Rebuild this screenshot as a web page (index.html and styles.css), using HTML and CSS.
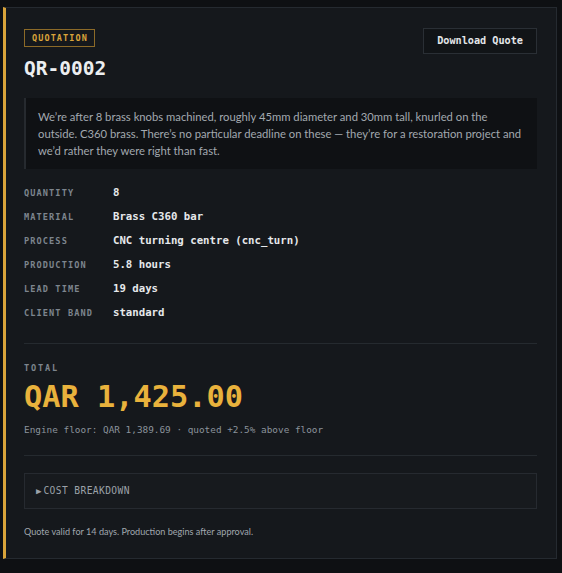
FILE: index.html
```html
<!DOCTYPE html>
<html>
<head>
<meta charset="utf-8">
<link rel="stylesheet" href="styles.css">
</head>
<body>
<div class="card">
  <div class="header">
    <div class="head-left">
      <span class="tag">QUOTATION</span>
      <h1 class="title">QR-0002</h1>
    </div>
    <button class="btn">Download Quote</button>
  </div>
  <blockquote class="note">We’re after 8 brass knobs machined, roughly 45mm diameter and 30mm tall, knurled on the outside. C360 brass. There’s no particular deadline on these — they’re for a restoration project and we’d rather they were right than fast.</blockquote>
  <dl class="specs">
    <dt>QUANTITY</dt><dd>8</dd>
    <dt>MATERIAL</dt><dd>Brass C360 bar</dd>
    <dt>PROCESS</dt><dd>CNC turning centre (cnc_turn)</dd>
    <dt>PRODUCTION</dt><dd>5.8 hours</dd>
    <dt>LEAD TIME</dt><dd>19 days</dd>
    <dt>CLIENT BAND</dt><dd>standard</dd>
  </dl>
  <hr class="rule rule-top">
  <div class="total-label">TOTAL</div>
  <div class="total">QAR 1,425.00</div>
  <div class="floor">Engine floor: QAR 1,389.69 · quoted +2.5% above floor</div>
  <hr class="rule rule-bottom">
  <div class="breakdown"><span class="tri">▶</span>COST BREAKDOWN</div>
  <p class="footer">Quote valid for 14 days. Production begins after approval.</p>
</div>
</body>
</html>
```

FILE: styles.css
```css
html, body {
  margin: 0;
  background: #0e1013;
}
body {
  padding: 7px 5px 15px 3px;
  font-family: "DejaVu Sans Mono", monospace;
}
.card {
  background: #15181c;
  border: 1px solid #252a30;
  border-left: 3px solid #d9a43a;
  padding: 21px 19px 19px 18px;
}
.header {
  display: flex;
  justify-content: space-between;
  align-items: flex-start;
}
.head-left {
  display: flex;
  flex-direction: column;
  align-items: flex-start;
}
.tag {
  font-size: 8.5px;
  line-height: 10px;
  font-weight: bold;
  letter-spacing: 1.1px;
  color: #d9a43a;
  border: 1px solid #8c6a28;
  padding: 3px 6px 3px 7px;
}
.title {
  margin: 10px 0 0;
  font-size: 19.5px;
  line-height: 24px;
  font-weight: bold;
  color: #eceef0;
}
.btn {
  margin-top: -1px;
  font-family: "DejaVu Sans Mono", monospace;
  font-weight: bold;
  font-size: 10.2px;
  color: #e4e6e9;
  background: #111417;
  border: 1px solid #2a2f35;
  padding: 6px 13px 7px;
  line-height: 11px;
}
.note {
  margin: 17px 0 0;
  background: #0f1114;
  border-left: 2px solid #262a2f;
  padding: 10px 14px 10px 12px;
  font-family: "Lato", sans-serif;
  font-size: 11.25px;
  line-height: 17px;
  color: #a3a9b0;
}
.specs {
  margin: 17px 0 0;
  display: grid;
  grid-template-columns: 89px 1fr;
  row-gap: 10px;
  line-height: 14px;
}
.specs dt {
  font-size: 8.6px;
  letter-spacing: 1.1px;
  font-weight: bold;
  color: #7d858e;
}
.specs dd {
  margin: 0;
  font-size: 10.7px;
  font-weight: bold;
  color: #e6e8eb;
}
.rule {
  border: 0;
  height: 1px;
  background: #252a2f;
  margin: 0;
}
.rule-top { margin-top: 23px; }
.total-label {
  margin-top: 18px;
  font-size: 8.6px;
  line-height: 12px;
  letter-spacing: 1.8px;
  font-weight: bold;
  color: #7d858e;
}
.total {
  margin-top: 5px;
  font-size: 30.3px;
  line-height: 36px;
  font-weight: bold;
  color: #e9b23c;
}
.floor {
  margin-top: 8px;
  font-size: 9.4px;
  line-height: 14px;
  color: #8b939b;
}
.rule-bottom { margin-top: 18px; }
.breakdown {
  margin-top: 17px;
  border: 1px solid #262a30;
  background: #171a1e;
  padding: 11px 11px;
  font-size: 9.6px;
  line-height: 12px;
  letter-spacing: 0.4px;
  color: #9ba2a9;
}
.tri {
  font-size: 9px;
  margin-right: 2px;
  letter-spacing: 0;
}
.footer {
  margin: 16px 0 0;
  font-family: "Lato", sans-serif;
  font-size: 9.1px;
  line-height: 14px;
  color: #a0a7ae;
}
```
